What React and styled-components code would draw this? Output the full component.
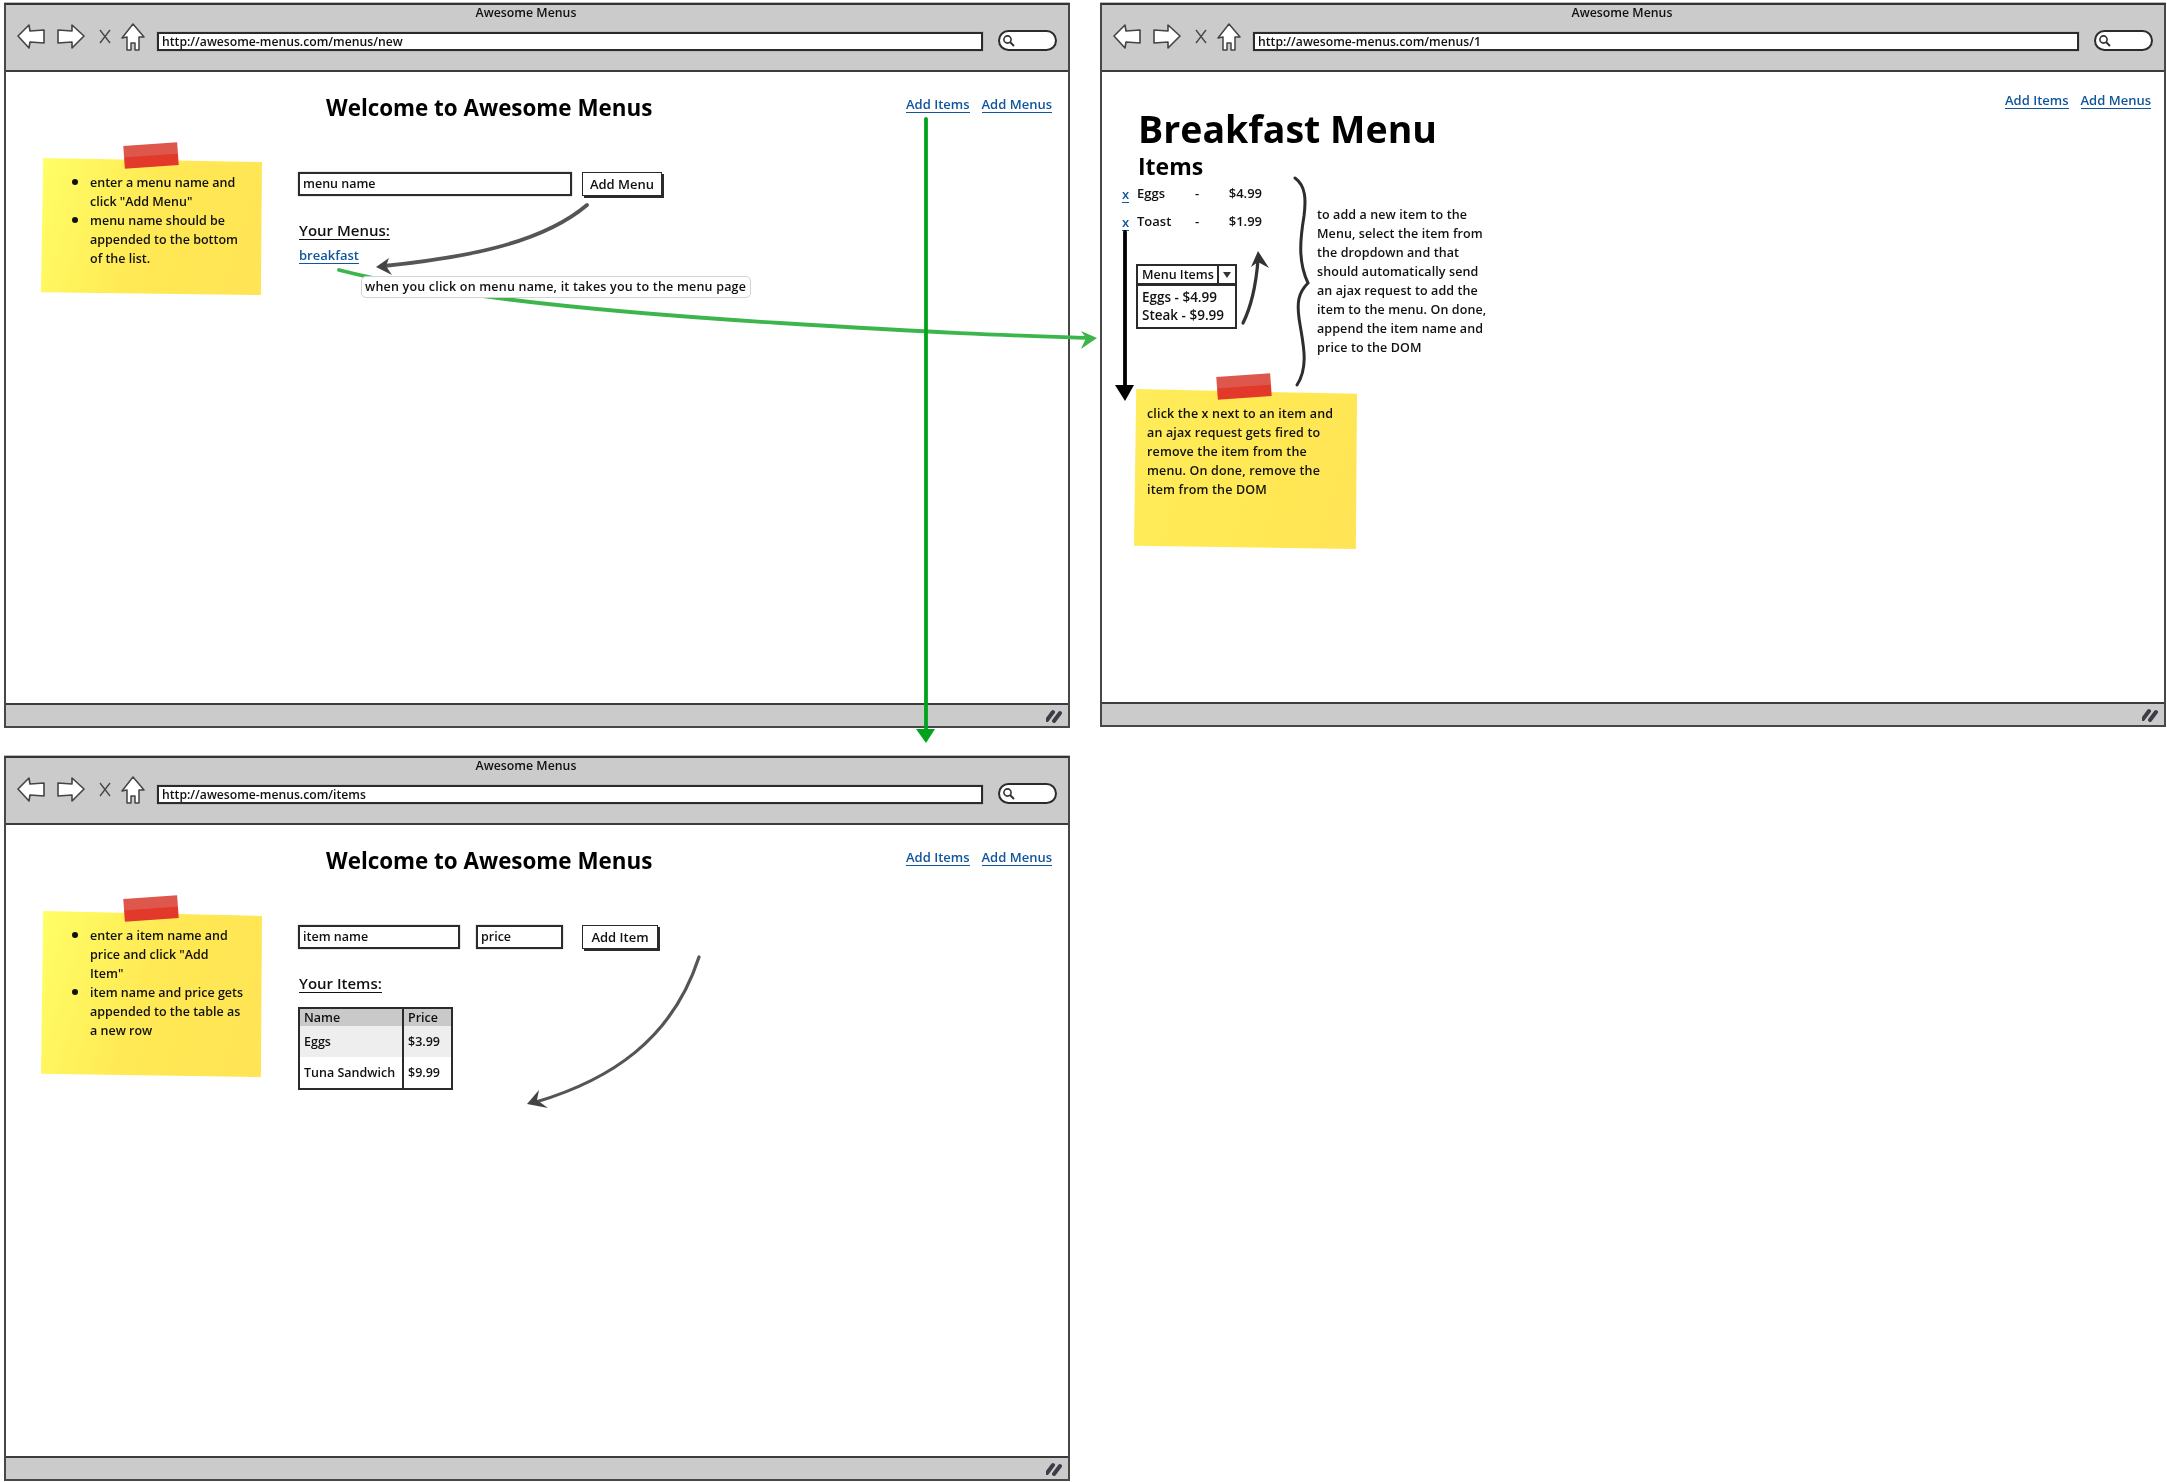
import React from 'react';
import styled, { createGlobalStyle } from 'styled-components';

const ink = '#2b2b2b';
const frame = '#474747';
const linkBlue = '#11569c';

const GlobalStyle = createGlobalStyle`
  html, body {
    margin: 0;
    padding: 0;
    background: #fff;
  }
  body {
    font-family: "Open Sans", "Noto Sans", sans-serif;
    font-size: 12.5px;
    font-weight: 600;
    color: #111;
  }
`;

const BackIcon = () => (
  <svg width="28" height="25" viewBox="0 0 28 25">
    <path d="M1 12 L12 1 L13 7 L27 6 L27 19 L13 18 L12 24 Z" fill="#fff" stroke="#444" strokeWidth="1.6" strokeLinejoin="round" />
  </svg>
);

const ForwardIcon = () => (
  <svg width="28" height="25" viewBox="0 0 28 25">
    <path d="M27 12 L15 1 L15 7 L1 6 L1 19 L15 18 L15 24 Z" fill="#fff" stroke="#444" strokeWidth="1.6" strokeLinejoin="round" />
  </svg>
);

const StopIcon = () => (
  <svg width="12" height="15" viewBox="0 0 12 15">
    <path d="M1 1 L11 14 M11 1 L1 14" fill="none" stroke="#444" strokeWidth="1.3" />
  </svg>
);

const HomeIcon = () => (
  <svg width="24" height="28" viewBox="0 0 24 28">
    <path d="M12 1 L23 14 L18 14 L18 27 L14 27 L14 20 L10 20 L10 27 L6 27 L6 14 L1 15 Z" fill="#fff" stroke="#444" strokeWidth="1.5" strokeLinejoin="round" />
  </svg>
);

const MagnifierIcon = () => (
  <svg width="13" height="13" viewBox="0 0 13 13">
    <circle cx="5.5" cy="5.5" r="3.6" fill="none" stroke="#333" strokeWidth="1.6" />
    <path d="M8 8 L12 12" stroke="#333" strokeWidth="2" />
  </svg>
);

const GripIcon = () => (
  <svg width="16" height="14" viewBox="0 0 16 14">
    <path d="M1 11 L7 3 M8 12 L14 4" stroke="#3d3d48" strokeWidth="4" strokeLinecap="round" />
  </svg>
);

const Canvas = styled.div`
  position: relative;
  width: 2167px;
  height: 1482px;
  overflow: hidden;
  background: #fff;
  filter: blur(0.3px);
`;

const Window = styled.section`
  position: absolute;
  left: ${p => p.$x}px;
  top: ${p => p.$y}px;
  width: 1066px;
  height: ${p => p.$h}px;
  box-sizing: border-box;
  display: flex;
  flex-direction: column;
  border: 2px solid ${frame};
  border-top-color: #333;
  box-shadow: 0 -1px 0 #bbb;
  background: #fff;
`;

const Chrome = styled.header`
  height: 67px;
  box-sizing: border-box;
  flex: none;
  background: #cbcbcb;
  border-bottom: 2px solid #3c3c3c;
`;

const ChromeTitle = styled.div`
  height: 18px;
  line-height: 16px;
  text-align: center;
  font-size: 12.3px;
  padding-right: 22px;
`;

const ToolRow = styled.div`
  display: flex;
  align-items: center;
  height: 32px;
  padding: 0 11px;
`;

const ToolSlot = styled.span`
  display: flex;
  flex: none;
  margin-right: ${p => p.$gap}px;
  margin-bottom: 5px;
`;

const UrlBar = styled.div`
  flex: 1;
  height: 19px;
  box-sizing: border-box;
  margin: 4px 15px 0 0;
  padding-left: 3px;
  line-height: 15px;
  font-size: 12.2px;
  background: #fff;
  border: 2px solid ${ink};
  box-shadow: 0 0 1px #777;
`;

const SearchOval = styled.div`
  flex: none;
  width: 59px;
  height: 21px;
  box-sizing: border-box;
  display: flex;
  align-items: center;
  margin-top: 3px;
  padding-left: 2px;
  background: #fff;
  border: 2px solid ${ink};
  border-radius: 11px;
`;

const Body = styled.main`
  flex: 1;
  min-height: 0;
  position: relative;
`;

const StatusBar = styled.footer`
  height: 23px;
  flex: none;
  box-sizing: border-box;
  display: flex;
  align-items: center;
  justify-content: flex-end;
  padding-right: 6px;
  background: #cbcbcb;
  border-top: 2px solid #3c3c3c;
`;

const PageHead = styled.div`
  display: flex;
  justify-content: space-between;
  padding: 19px 16px 0 320px;
`;

const PageTitle = styled.h1`
  margin: 0;
  font-size: 22.4px;
  line-height: 34px;
  font-weight: 700;
  color: #000;
`;

const Nav = styled.nav`
  display: flex;
  gap: 12px;
  padding: ${p => p.$top}px ${p => p.$right}px 0 0;
`;

const TextLink = styled.a`
  color: ${linkBlue};
  font-size: 13px;
  line-height: 15px;
  text-decoration: none;
  border-bottom: 1px solid ${linkBlue};
  align-self: flex-start;
`;

const RemoveLink = styled(TextLink)`
  align-self: center;
  justify-self: start;
  margin-top: 3px;
`;

const Columns = styled.div`
  display: flex;
  padding: 33px 0 0 35px;
  align-items: flex-start;
`;

const Note = styled.aside`
  position: relative;
  isolation: isolate;
  flex: none;
  width: ${p => p.$w}px;
  height: ${p => p.$h}px;
  box-sizing: border-box;
  padding: 15px 0 0 ${p => p.$pad || 0}px;
  line-height: 19px;
  color: #111;
  &::before {
    content: '';
    position: absolute;
    inset: 0;
    z-index: -1;
    clip-path: polygon(1% 0, 100% 3%, 99.5% 100%, 0 98%);
    background: linear-gradient(108deg, ${p => p.$light} 0%, #ffe954 48%, #ffe455 100%);
  }
`;

const Tape = styled.span`
  position: absolute;
  left: ${p => p.$left}px;
  top: -14px;
  width: 54px;
  height: 23px;
  transform: rotate(-4deg);
  background: linear-gradient(#dd574c 0 48%, #e2392a 52% 100%);
`;

const NoteList = styled.ul`
  margin: 0;
  padding: 0 0 0 49px;
  list-style: none;
  white-space: nowrap;
`;

const NoteItem = styled.li`
  position: relative;
  &::before {
    content: '';
    position: absolute;
    left: -18px;
    top: 6px;
    width: 6px;
    height: 6px;
    border-radius: 50%;
    background: #111;
  }
`;

const MainColumn = styled.div`
  margin-left: 36px;
  padding-top: 14px;
`;

const FormRow = styled.form`
  display: flex;
  align-items: center;
  margin: 0;
`;

const FieldBox = styled.div`
  width: ${p => p.$w}px;
  height: 24px;
  box-sizing: border-box;
  margin-right: ${p => p.$gap}px;
  padding-left: 3px;
  line-height: 20px;
  background: #fff;
  border: 2px solid ${ink};
  box-shadow: 0 0 1px #777;
`;

const SketchButton = styled.button`
  width: ${p => p.$w}px;
  height: 24px;
  box-sizing: border-box;
  padding: 0;
  font: inherit;
  font-size: 13px;
  color: #111;
  background: #fff;
  border: 1.5px solid ${ink};
  box-shadow: 2px 2px 0 ${ink};
`;

const SectionHeading = styled.h3`
  display: inline-block;
  margin: 26px 0 0 1px;
  font-size: 15px;
  line-height: 17px;
  font-weight: 600;
  border-bottom: 1.5px solid #111;
`;

const MenuList = styled.div`
  position: relative;
  display: flex;
  margin: 8px 0 0 1px;
`;

const Tooltip = styled.div`
  position: absolute;
  z-index: 2;
  left: 62px;
  top: 28px;
  width: 390px;
  height: 22px;
  box-sizing: border-box;
  padding-left: 3px;
  line-height: 20px;
  letter-spacing: 0.2px;
  white-space: nowrap;
  background: #fff;
  border: 1px solid #d2d2d2;
  border-radius: 5px;
`;

const ItemTable = styled.table`
  margin-top: 14px;
  width: 155px;
  border-collapse: collapse;
  table-layout: fixed;
  border: 2px solid ${ink};
  font-size: 12.5px;
  th, td {
    padding: 0 0 0 4px;
    text-align: left;
    font-weight: 600;
    white-space: nowrap;
    overflow: hidden;
  }
  th {
    height: 17px;
    background: #c9c9c9;
  }
  td {
    height: 31px;
  }
  th:first-child, td:first-child {
    width: 98px;
    border-right: 2px solid ${ink};
  }
  tbody tr:first-child td {
    background: #eeeeee;
  }
`;

const DetailPage = styled.div`
  display: flex;
  justify-content: space-between;
  height: 100%;
`;

const DetailContent = styled.div`
  padding: 34px 0 0 20px;
`;

const DetailTitle = styled.h1`
  margin: 0 0 0 16px;
  font-size: 37.5px;
  line-height: 46px;
  font-weight: 700;
  color: #000;
`;

const DetailSubtitle = styled.h2`
  margin: 1px 0 0 16px;
  font-size: 23px;
  line-height: 26px;
  font-weight: 700;
  color: #000;
`;

const Split = styled.div`
  display: grid;
  grid-template-columns: 195px auto;
`;

const PriceRow = styled.div`
  display: grid;
  grid-template-columns: 15px 58px 10px 57px;
  align-items: center;
  height: 28px;
  font-size: 13px;
`;

const Price = styled.span`
  text-align: right;
`;

const Combo = styled.div`
  width: 101px;
  margin: 29px 0 0 14px;
`;

const ComboHead = styled.div`
  display: flex;
  height: 21px;
  box-sizing: border-box;
  line-height: 17px;
  border: 2px solid ${ink};
`;

const ComboLabel = styled.span`
  flex: 1;
  padding-left: 4px;
  border-right: 2px solid ${ink};
  font-size: 12.5px;
`;

const ComboCaret = styled.span`
  width: 16px;
  display: flex;
  align-items: center;
  justify-content: center;
  &::after {
    content: '';
    border: 4.5px solid transparent;
    border-top: 6px solid #333;
    border-bottom: 0;
  }
`;

const ComboList = styled.div`
  height: 44px;
  box-sizing: border-box;
  padding: 2px 0 0 4px;
  line-height: 18px;
  font-size: 13.5px;
  border: 2px solid ${ink};
  border-top-width: 1px;
  white-space: nowrap;
`;

const Explanation = styled.p`
  margin: 0;
  padding-top: 26px;
  line-height: 19px;
  letter-spacing: 0.1px;
  white-space: nowrap;
`;

const NoteWrap = styled.div`
  margin: 32px 0 0 12px;
`;

const NoteText = styled.p`
  margin: 0;
  white-space: nowrap;
  letter-spacing: 0.15px;
`;

const ArrowLayer = styled.svg`
  position: absolute;
  inset: 0;
  z-index: 1;
  pointer-events: none;
`;

const BrowserWindow = ({ x, y, h, url, children }) => (
  <Window $x={x} $y={y} $h={h}>
    <Chrome>
      <ChromeTitle>Awesome Menus</ChromeTitle>
      <ToolRow>
        <ToolSlot $gap={12}><BackIcon /></ToolSlot>
        <ToolSlot $gap={14}><ForwardIcon /></ToolSlot>
        <ToolSlot $gap={10}><StopIcon /></ToolSlot>
        <ToolSlot $gap={12}><HomeIcon /></ToolSlot>
        <UrlBar>{url}</UrlBar>
        <SearchOval><MagnifierIcon /></SearchOval>
      </ToolRow>
    </Chrome>
    <Body>{children}</Body>
    <StatusBar><GripIcon /></StatusBar>
  </Window>
);

const Links = ({ top, right }) => (
  <Nav $top={top} $right={right}>
    <TextLink>Add Items</TextLink>
    <TextLink>Add Menus</TextLink>
  </Nav>
);

const NewMenuPage = () => (
  <>
    <PageHead>
      <PageTitle>Welcome to Awesome Menus</PageTitle>
      <Links top={6} right={0} />
    </PageHead>
    <Columns>
      <Note $w={221} $h={137} $light="#ffff66">
        <Tape $left={83} />
        <NoteList>
          <NoteItem>enter a menu name and<br />click "Add Menu"</NoteItem>
          <NoteItem>menu name should be<br />appended to the bottom<br />of the list.</NoteItem>
        </NoteList>
      </Note>
      <MainColumn>
        <FormRow>
          <FieldBox $w={274} $gap={10}>menu name</FieldBox>
          <SketchButton type="button" $w={80}>Add Menu</SketchButton>
        </FormRow>
        <SectionHeading>Your Menus:</SectionHeading>
        <MenuList>
          <TextLink>breakfast</TextLink>
          <Tooltip>when you click on menu name, it takes you to the menu page</Tooltip>
        </MenuList>
      </MainColumn>
    </Columns>
  </>
);

const ItemsPage = () => (
  <>
    <PageHead>
      <PageTitle>Welcome to Awesome Menus</PageTitle>
      <Links top={6} right={0} />
    </PageHead>
    <Columns>
      <Note $w={221} $h={166} $light="#ffff66">
        <Tape $left={83} />
        <NoteList>
          <NoteItem>enter a item name and<br />price and click "Add<br />Item"</NoteItem>
          <NoteItem>item name and price gets<br />appended to the table as<br />a new row</NoteItem>
        </NoteList>
      </Note>
      <MainColumn>
        <FormRow>
          <FieldBox $w={162} $gap={16}>item name</FieldBox>
          <FieldBox $w={87} $gap={19}>price</FieldBox>
          <SketchButton type="button" $w={76}>Add Item</SketchButton>
        </FormRow>
        <SectionHeading>Your Items:</SectionHeading>
        <ItemTable>
          <thead>
            <tr><th>Name</th><th>Price</th></tr>
          </thead>
          <tbody>
            <tr><td>Eggs</td><td>$3.99</td></tr>
            <tr><td>Tuna Sandwich</td><td>$9.99</td></tr>
          </tbody>
        </ItemTable>
      </MainColumn>
    </Columns>
  </>
);

const BreakfastPage = () => (
  <DetailPage>
    <DetailContent>
      <DetailTitle>Breakfast Menu</DetailTitle>
      <DetailSubtitle>Items</DetailSubtitle>
      <Split>
        <div>
          <PriceRow>
            <RemoveLink>x</RemoveLink><span>Eggs</span><span>-</span><Price>$4.99</Price>
          </PriceRow>
          <PriceRow>
            <RemoveLink>x</RemoveLink><span>Toast</span><span>-</span><Price>$1.99</Price>
          </PriceRow>
          <Combo>
            <ComboHead>
              <ComboLabel>Menu Items</ComboLabel>
              <ComboCaret />
            </ComboHead>
            <ComboList>Eggs - $4.99<br />Steak - $9.99</ComboList>
          </Combo>
        </div>
        <Explanation>
          to add a new item to the<br />
          Menu, select the item from<br />
          the dropdown and that<br />
          should automatically send<br />
          an ajax request to add the<br />
          item to the menu. On done,<br />
          append the item name and<br />
          price to the DOM
        </Explanation>
      </Split>
      <NoteWrap>
        <Note $w={223} $h={160} $pad={13} $light="#ffec5a">
          <Tape $left={83} />
          <NoteText>
            click the x next to an item and<br />
            an ajax request gets fired to<br />
            remove the item from the<br />
            menu. On done, remove the<br />
            item from the DOM
          </NoteText>
        </Note>
      </NoteWrap>
    </DetailContent>
    <Links top={21} right={13} />
  </DetailPage>
);

const Arrows = () => (
  <ArrowLayer width="2167" height="1482" viewBox="0 0 2167 1482">
    <g fill="none" strokeLinecap="round">
      <path d="M339 270 C 440 296, 600 312, 780 323 S 1000 335, 1088 338" stroke="#3cb64c" strokeWidth="3.8" />
      <path d="M926 119 L926 732" stroke="#02a31c" strokeWidth="3.8" />
      <path d="M587 205 C 540 245, 460 258, 384 266" stroke="#555" strokeWidth="3.8" />
      <path d="M699 957 C 672 1040, 610 1080, 536 1102" stroke="#555" strokeWidth="3.2" />
      <path d="M1125 232 L1125 388" stroke="#000" strokeWidth="3.8" />
      <path d="M1243 323 C 1252 305, 1256 285, 1258 260" stroke="#333" strokeWidth="3.2" />
      <path d="M1295 178 C 1306 186, 1306 200, 1304 216 C 1300 240, 1298 262, 1308 283 C 1298 293, 1297 303, 1299 318 C 1302 340, 1310 365, 1297 385" stroke="#2d2d2d" strokeWidth="3" />
    </g>
    <polygon points="1097,338 1081,331 1086,338 1081,349" fill="#3cb64c" />
    <polygon points="916,729 935,729 926,743" fill="#02a31c" />
    <polygon points="376,267 389,258 386,266 392,275" fill="#444" />
    <polygon points="527,1104 539,1090 537,1100 548,1108" fill="#444" />
    <polygon points="1115,385 1134,385 1125,401" fill="#000" />
    <polygon points="1258,251 1269,268 1258,262 1251,267" fill="#333" />
  </ArrowLayer>
);

export default function App() {
  return (
    <Canvas>
      <GlobalStyle />
      <BrowserWindow x={4} y={3} h={725} url="http://awesome-menus.com/menus/new">
        <NewMenuPage />
      </BrowserWindow>
      <BrowserWindow x={1100} y={3} h={724} url="http://awesome-menus.com/menus/1">
        <BreakfastPage />
      </BrowserWindow>
      <BrowserWindow x={4} y={756} h={725} url="http://awesome-menus.com/items">
        <ItemsPage />
      </BrowserWindow>
      <Arrows />
    </Canvas>
  );
}
